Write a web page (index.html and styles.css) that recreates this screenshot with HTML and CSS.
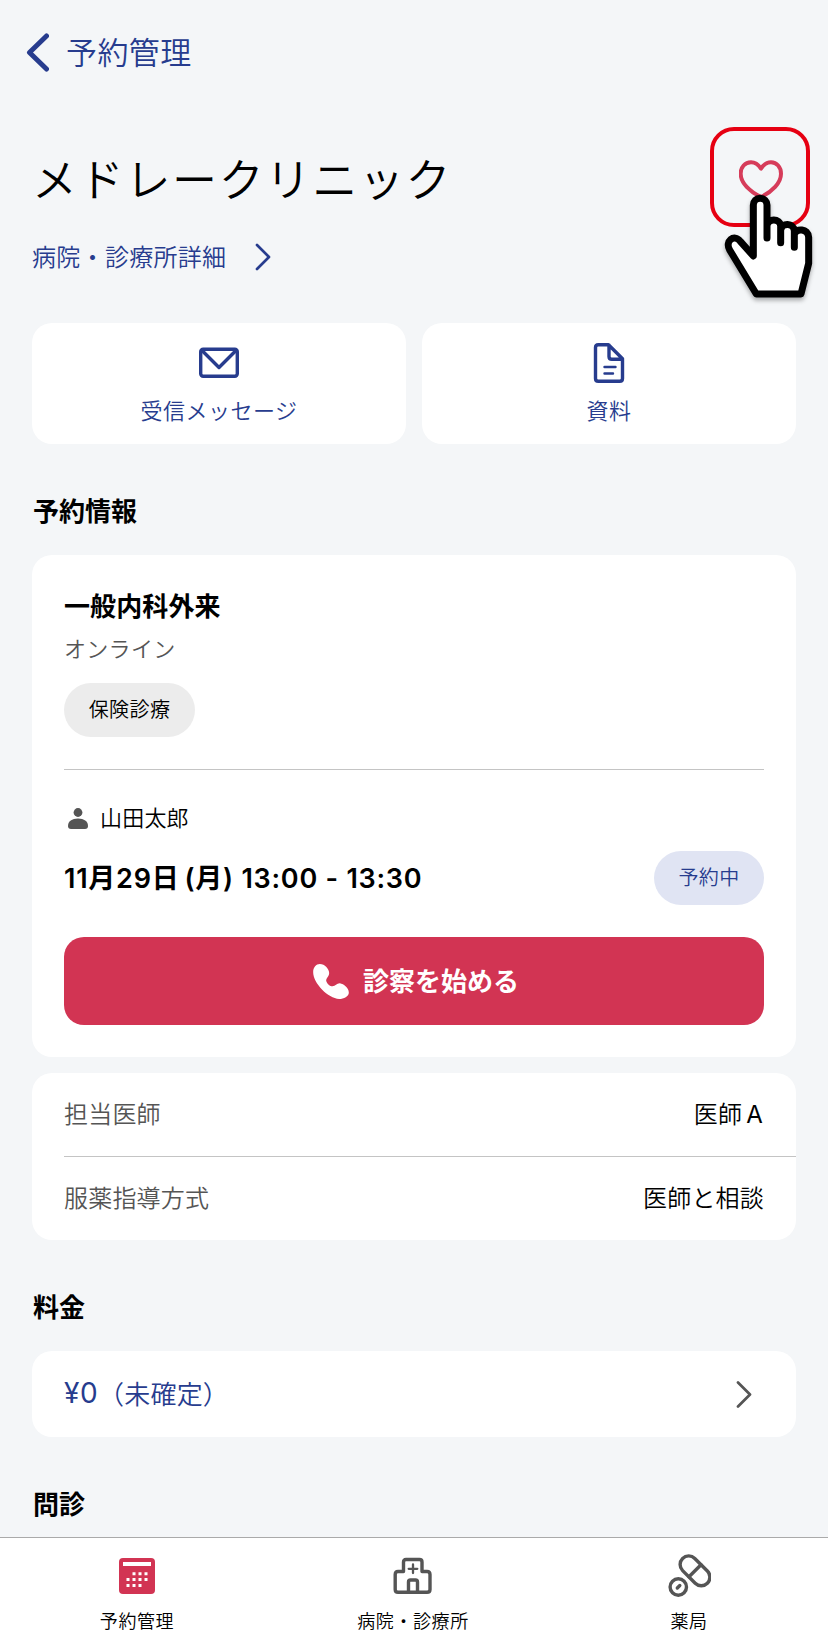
FILE: index.html
```html
<!DOCTYPE html>
<html lang="ja">
<head>
<meta charset="utf-8">
<title>予約管理</title>
<link rel="stylesheet" href="styles.css">
</head>
<body>
<div class="app">
  <header class="nav">
    <svg class="nav-back" width="24" height="40" viewBox="0 0 24 40"><path d="M21.500 4 4.500 20.500 21.500 37"/></svg>
    <span class="nav-title">予約管理</span>
  </header>
  <main class="content">
    <section class="clinic">
      <h1 class="clinic-name">メドレークリニック</h1>
      <a class="clinic-link"><span>病院・診療所詳細</span>
        <svg class="chev" width="16" height="28" viewBox="0 0 16 28"><path d="M2 2 14 14 2 26"/></svg></a>
      <div class="favorite">
        <svg class="heart" width="44" height="38" viewBox="147 151 132 114"><path d="M213 177C205 165 197 158 183 158C165 158 152 172 152 192C152 220 180 246 213 262C246 246 273 220 273 192C273 172 260 158 243 158C229 158 221 165 213 177Z"/></svg>
      </div>
      <svg class="pointer" width="96" height="116" viewBox="94 246 288 348"><path d="M188 438V285a20.500 20.500 0 0 1 41 0V384V348C231 324 268 324 270 348V398V360C273 337 309 339 311 362V412V374C315 353 353 355 354 382V460L331 552H197L117 420C102 394 130 370 149 394Z"/></svg>
    </section>
    <section class="actions">
      <div class="action">
        <svg class="line-icon" width="40" height="40" viewBox="0 0 40 40"><rect x="1.700" y="6.200" width="36.600" height="27" rx="2.500"/><path d="M3.500 8 20 24.500 36.500 8"/></svg>
        <span>受信メッセージ</span>
      </div>
      <div class="action">
        <svg class="line-icon" width="40" height="40" viewBox="0 0 40 40"><path d="M9.300 1.700H19.500L33.500 15.700V35.500Q33.500 38.300 30.700 38.300H9.300Q6.500 38.300 6.500 35.500V4.500Q6.500 1.700 9.300 1.700M20 2V13.500Q20 16.300 22.800 16.300H33"/><path class="thin" d="M15.500 24H26.500M15.500 30.500H24"/></svg>
        <span>資料</span>
      </div>
    </section>
    <h2 class="heading">予約情報</h2>
    <section class="card booking">
      <h3 class="dept">一般内科外来</h3>
      <p class="mode">オンライン</p>
      <span class="pill pill-gray">保険診療</span>
      <div class="patient">
        <svg class="person" width="20" height="21" viewBox="0 0 20 21"><circle cx="10" cy="4.500" r="4.400"/><path d="M0 18C0 13.500 4 10.600 10 10.600S20 13.500 20 18Q20 21 17 21H3Q0 21 0 18Z"/></svg>
        <span class="patient-name">山田太郎</span>
      </div>
      <div class="slot">
        <span class="time">11月29日<span class="weekday">(月)</span> 13:00 - 13:30</span>
        <span class="pill pill-blue">予約中</span>
      </div>
      <button class="start">
        <svg class="phone" width="36" height="35" viewBox="0 0 107 105"><path d="M20 0C35 0 48 15 48 27C48 37 39 42 39 50C42 60 50 67 58 67C67 67 70 58 80 58C92 60 107 72 107 86C107 97 92 105 78 105C45 103 0 58 0 24C0 10 9 0 20 0Z"/></svg>
        <span class="start-text">診察を始める</span>
      </button>
    </section>
    <section class="card list">
      <div class="row"><span class="label">担当医師</span><span class="value">医師<span class="latin">A</span></span></div>
      <div class="row"><span class="label">服薬指導方式</span><span class="value">医師と相談</span></div>
    </section>
    <h2 class="heading">料金</h2>
    <section class="card fee">
      <span class="amount"><span class="yen">¥0</span><span class="note">（未確定）</span></span>
      <svg class="chev chev-gray" width="16" height="28" viewBox="0 0 16 28"><path d="M2 2.500 14 14.500 2 26.500"/></svg>
    </section>
    <h2 class="heading heading-last">問診</h2>
  </main>
  <nav class="tabs">
    <div class="tab">
      <svg width="44" height="44" viewBox="0 0 44 44"><rect x="4" y="4" width="36" height="36" rx="4" fill="#d23453"/><path fill="#fff" d="M8 8h28v4H8z"/><path d="M17.500 19.700h15M11.500 25.500h21M11.500 31.500h15" fill="none" stroke="#fff" stroke-width="3" stroke-dasharray="3 3"/></svg>
      <span>予約管理</span>
    </div>
    <div class="tab">
      <svg class="tab-icon" width="44" height="44" viewBox="0 0 44 44"><path d="M12.500 17.500V8Q12.500 5.500 15 5.500H28.500Q31 5.500 31 8V17.500H36Q39 17.500 39 20.500V35.500Q39 38.300 36 38.300H7Q4.200 38.300 4.200 35.500V20.500Q4.200 17.500 7 17.500ZM17.500 38V28Q17.500 26 19.500 26H24.500Q26.500 26 26.500 28V38"/><path class="thin" d="M22 10.500V19M17.700 14.800H26.300"/></svg>
      <span>病院・診療所</span>
    </div>
    <div class="tab">
      <svg class="tab-icon" width="44" height="44" viewBox="0 0 44 44"><rect x="10.500" y="8.200" width="35" height="17.200" rx="8.600" transform="rotate(45 28 16.800)"/><path d="M22 22.800 34 10.800"/><circle cx="11.300" cy="33" r="8.200"/><path d="M10.300 34 12.800 31.500"/></svg>
      <span>薬局</span>
    </div>
  </nav>
</div>
</body>
</html>
```
FILE: styles.css
```css
* { box-sizing: border-box; }
body {
  margin: 0;
  background: #f4f6f8;
  color: #000;
  font-family: "Noto Sans CJK JP", "Noto Sans", sans-serif;
  font-weight: 350;
}
h1, h2, h3, p { margin: 0; }
svg { display: block; flex: none; }
.app { width: 828px; height: 1636px; display: flex; flex-direction: column; overflow: hidden; }
.nav { height: 104px; padding-left: 25px; display: flex; align-items: center; gap: 17px; color: #273c8e; }
.nav-back path { fill: none; stroke: #273c8e; stroke-width: 5; stroke-linecap: round; stroke-linejoin: round; }
.nav-title { font-size: 31px; letter-spacing: .4px; line-height: 40px; padding-bottom: 3px; }
.content { flex: 1; min-height: 0; padding: 0 32px; }
.clinic { position: relative; height: 219px; padding-top: 42px; }
.clinic-name { font-size: 45px; line-height: 64px; font-weight: 350; letter-spacing: 1.7px; }
.clinic-link { display: flex; align-items: center; gap: 29px; height: 36px; margin-top: 29px; color: #273c8e; font-size: 24px; letter-spacing: .3px; }
.clinic-link span { padding-bottom: 3px; }
.chev path { fill: none; stroke: #273c8e; stroke-width: 2.7; stroke-linecap: round; stroke-linejoin: round; }
.chev-gray path { stroke: #555; }
.favorite { position: absolute; right: -14px; top: 23px; width: 100px; height: 100px; border: 4px solid #e60012; border-radius: 24px; display: flex; justify-content: center; padding: 29px 0 0 2px; }
.heart path { fill: none; stroke: #d63c5a; stroke-width: 12; stroke-linejoin: round; }
.pointer { position: absolute; right: -22px; top: 88px; overflow: visible; filter: drop-shadow(0 3px 2px rgba(0,0,0,.3)); }
.pointer path { fill: #fff; stroke: #000; stroke-width: 21; stroke-linejoin: round; stroke-linecap: round; }
.actions { display: grid; grid-template-columns: 1fr 1fr; gap: 16px; }
.action { height: 121px; padding-top: 20px; border-radius: 20px; background: #fff; display: flex; flex-direction: column; align-items: center; gap: 8px; color: #273c8e; font-size: 22px; letter-spacing: .5px; line-height: 36px; }
.line-icon path, .line-icon rect { fill: none; stroke: #273c8e; stroke-width: 3.4; stroke-linecap: round; stroke-linejoin: round; }
.line-icon .thin { stroke-width: 2.4; }
.heading { height: 40px; margin: 46px 0 25px 1px; font-size: 26px; line-height: 40px; font-weight: 700; }
.card { background: #fff; border-radius: 20px; }
.booking { height: 502px; padding: 31px 32px 32px; }
.dept { font-size: 26px; line-height: 38px; font-weight: 700; letter-spacing: .1px; }
.mode { margin-top: 6px; font-size: 22px; line-height: 34px; letter-spacing: .3px; color: #555; }
.pill { display: inline-flex; align-items: center; justify-content: center; height: 54px; padding-bottom: 3px; border-radius: 27px; font-size: 20px; letter-spacing: .4px; }
.pill-gray { width: 131px; background: #ececec; margin-top: 19px; vertical-align: top; }
.pill-blue { width: 110px; background: #e0e4f3; color: #273c8e; }
.patient { display: flex; align-items: center; gap: 12px; height: 82px; margin-top: 32px; padding: 16px 0 0 4px; border-top: 1px solid #c4c4c4; font-size: 22px; letter-spacing: .2px; }
.patient-name { padding-bottom: 5px; }
.person { fill: #555; }
.slot { display: flex; align-items: center; justify-content: space-between; }
.time { padding-bottom: 3px; font-family: "Inter", "Noto Sans CJK JP", sans-serif; font-size: 27px; font-weight: 600; letter-spacing: .75px; white-space: nowrap; }
.weekday { margin-left: 5px; }
.start { display: flex; align-items: center; justify-content: center; gap: 14px; width: 100%; height: 88px; margin-top: 32px; padding: 0 0 0 4px; border: 0; border-radius: 20px; background: #d23453; color: #fff; font: 700 26px "Noto Sans CJK JP", sans-serif; }
.start-text { padding-bottom: 4px; }
.phone { fill: #fff; }
.list { height: 167px; margin-top: 16px; padding-left: 32px; }
.row { height: 83px; display: flex; align-items: center; justify-content: space-between; padding: 0 32px 4px 0; font-size: 24px; letter-spacing: .2px; }
.row + .row { height: 84px; border-top: 1px solid #c4c4c4; }
.label { color: #555; }
.latin { margin: 0 1px 0 4px; font-family: "Inter", sans-serif; font-weight: 400; }
.fee { height: 86px; display: flex; align-items: center; justify-content: space-between; padding: 0 44px 0 32px; color: #273c8e; font-size: 26px; }
.amount { display: flex; align-items: center; padding-bottom: 3px; }
.note { letter-spacing: .2px; }
.yen { font-family: "Inter", sans-serif; font-weight: 400; font-size: 28px; letter-spacing: .5px; padding-top: 1px; }
.heading-last { margin-bottom: 0; }
.tabs { display: grid; grid-template-columns: repeat(3, 276px); height: 99px; margin-left: -1px; padding-right: 1px; border-top: 1px solid #aaa; background: #fff; }
.tab { display: flex; flex-direction: column; align-items: center; gap: 7px; padding-top: 16px; font-size: 18px; letter-spacing: .6px; line-height: 30px; }
.tab-icon path, .tab-icon rect, .tab-icon circle { fill: none; stroke: #555; stroke-width: 3.400; stroke-linecap: round; stroke-linejoin: round; }
.tab-icon .thin { stroke-width: 2.300; }
```
